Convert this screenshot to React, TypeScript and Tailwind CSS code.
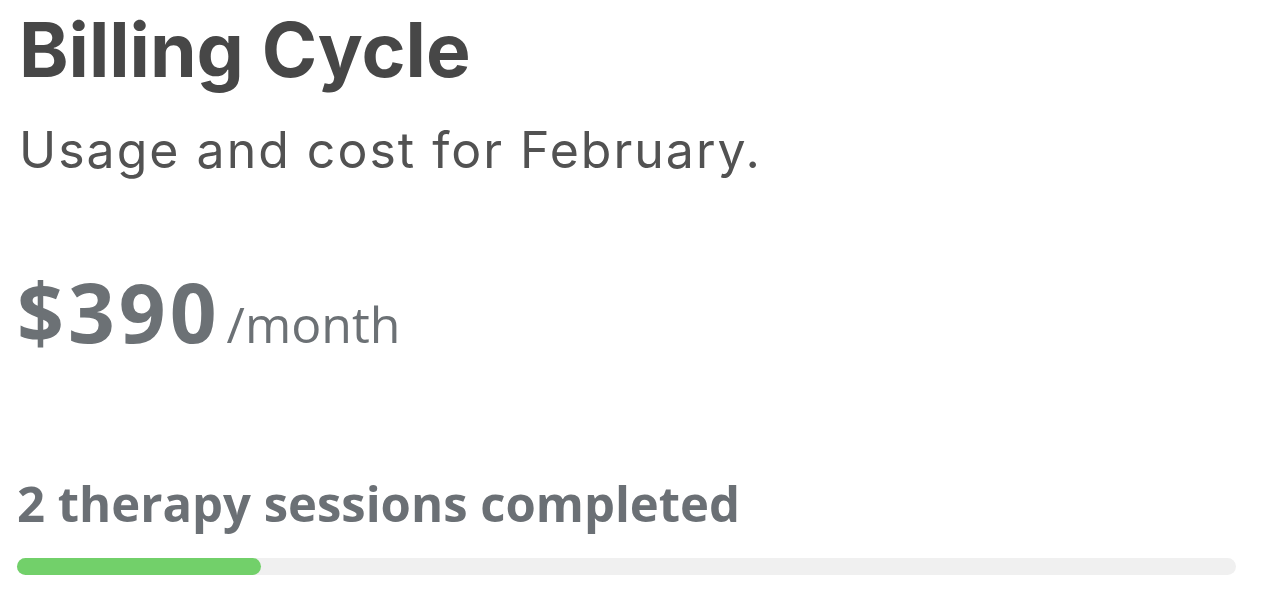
export default function App() {
  const done = 2
  const total = 10

  return (
    <div className="min-h-screen w-full bg-white">
      <div className="flex flex-col pl-[17px] pr-9 pt-3">
        <h1
          className="pl-[2px] text-[75px] leading-[75px] font-bold text-[#474747]"
          style={{ fontFamily: "Inter, sans-serif" }}
        >
          Billing Cycle
        </h1>
        <p
          className="mt-[38px] pl-[2px] text-[50px] leading-[50px] tracking-[2px] text-[#525252]"
          style={{ fontFamily: "Inter, sans-serif" }}
        >
          Usage and cost for February.
        </p>

        <div
          className="mt-[95px] flex items-baseline text-[#6c7175]"
          style={{ fontFamily: "'Open Sans', sans-serif" }}
        >
          <span className="text-[82px] leading-[82px] font-bold tracking-[4px]">$390</span>
          <span className="ml-[6px] text-[50px] leading-[50px]">/month</span>
        </div>

        <p
          className="mt-[127px] text-[49px] leading-[49px] font-bold text-[#6b7075]"
          style={{ fontFamily: "'Open Sans', sans-serif" }}
        >
          {done} therapy sessions completed
        </p>

        <div className="mt-[30px] h-[17px] w-full rounded-full bg-[#f0f0f0]">
          <div
            className="h-full rounded-full bg-[#72d06a]"
            style={{ width: `${(done / total) * 100}%` }}
          />
        </div>
      </div>
    </div>
  )
}
